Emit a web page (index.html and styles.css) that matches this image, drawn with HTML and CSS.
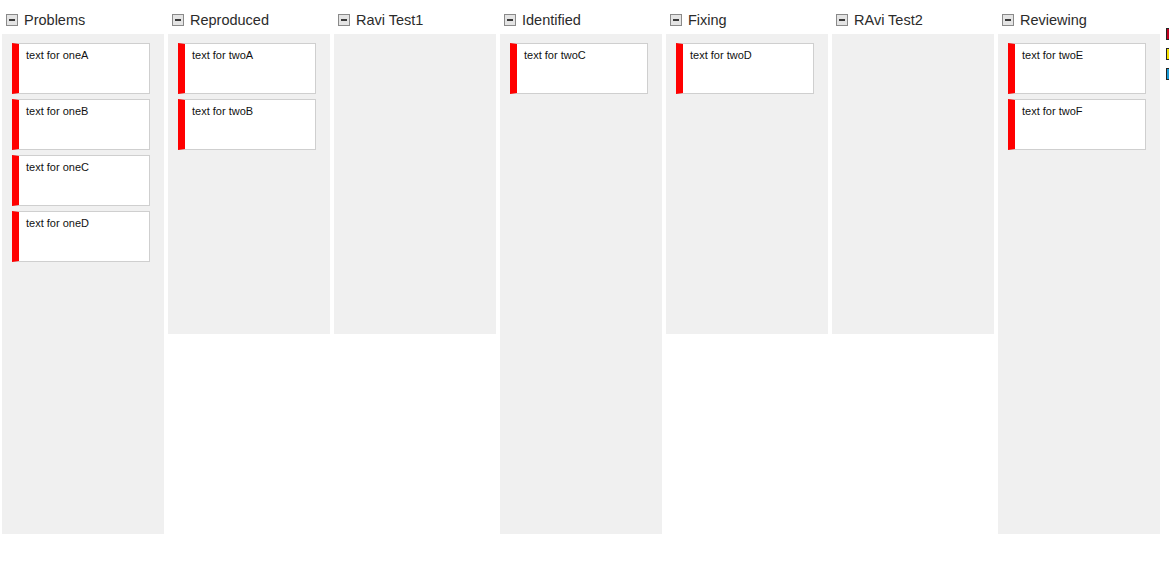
FILE: index.html
```html
<!DOCTYPE html>
<html>
<head>
<meta charset="utf-8">
<link rel="stylesheet" href="styles.css">
</head>
<body>
<div class="board">
  <div class="col">
    <div class="head"><span class="tog"></span><span class="title">Problems</span></div>
    <div class="body tall">
      <div class="card"><span>text for oneA</span></div>
      <div class="card"><span>text for oneB</span></div>
      <div class="card"><span>text for oneC</span></div>
      <div class="card"><span>text for oneD</span></div>
    </div>
  </div>
  <div class="col">
    <div class="head"><span class="tog"></span><span class="title">Reproduced</span></div>
    <div class="body">
      <div class="card"><span>text for twoA</span></div>
      <div class="card"><span>text for twoB</span></div>
    </div>
  </div>
  <div class="col">
    <div class="head"><span class="tog"></span><span class="title">Ravi Test1</span></div>
    <div class="body"></div>
  </div>
  <div class="col">
    <div class="head"><span class="tog"></span><span class="title">Identified</span></div>
    <div class="body tall">
      <div class="card"><span>text for twoC</span></div>
    </div>
  </div>
  <div class="col">
    <div class="head"><span class="tog"></span><span class="title">Fixing</span></div>
    <div class="body">
      <div class="card"><span>text for twoD</span></div>
    </div>
  </div>
  <div class="col">
    <div class="head"><span class="tog"></span><span class="title">RAvi Test2</span></div>
    <div class="body"></div>
  </div>
  <div class="col">
    <div class="head"><span class="tog"></span><span class="title">Reviewing</span></div>
    <div class="body tall">
      <div class="card"><span>text for twoE</span></div>
      <div class="card"><span>text for twoF</span></div>
    </div>
  </div>
  <div class="legend">
    <span class="sw red"></span>
    <span class="sw yellow"></span>
    <span class="sw blue"></span>
  </div>
</div>
</body>
</html>
```

FILE: styles.css
```css
html, body {
  margin: 0;
  padding: 0;
  background: #fff;
  overflow: hidden;
}
body {
  font-family: "Liberation Sans", Arial, sans-serif;
  color: #222;
}
.board {
  display: flex;
  align-items: flex-start;
  gap: 4px;
  padding: 0 0 0 2px;
  width: 1200px;
}
.col {
  width: 162px;
  flex: none;
}
.head {
  height: 34px;
  display: flex;
  align-items: center;
  padding: 5px 0 0 4px;
  box-sizing: border-box;
}
.tog {
  width: 12px;
  height: 12px;
  box-sizing: border-box;
  border: 1px solid #8a8a8a;
  background: #e4e4e4;
  position: relative;
  margin-right: 6px;
  flex: none;
}
.tog::after {
  content: "";
  position: absolute;
  left: 2px;
  right: 2px;
  top: 4px;
  height: 2px;
  background: #3a3a3a;
}
.title {
  font-size: 14.5px;
  color: #2b2b2b;
}
.body {
  background: #f0f0f0;
  height: 300px;
  box-sizing: border-box;
  padding: 9px 14px 0 10px;
  display: flex;
  flex-direction: column;
  gap: 5px;
}
.body.tall {
  height: 500px;
}
.card {
  height: 51px;
  box-sizing: border-box;
  background: #fff;
  border: 1px solid #cfcfcf;
  border-left: 7px solid #ff0000;
  padding: 5px 0 0 7px;
  font-size: 11px;
  color: #111;
}
.legend {
  display: flex;
  flex-direction: column;
  gap: 8px;
  margin-top: 28px;
  margin-left: 2px;
}
.sw {
  width: 10px;
  height: 12px;
  border: 1px solid #222;
  box-sizing: border-box;
}
.sw.red { background: #c00020; }
.sw.yellow { background: #f5e000; }
.sw.blue { background: #1a9ad6; }
```
